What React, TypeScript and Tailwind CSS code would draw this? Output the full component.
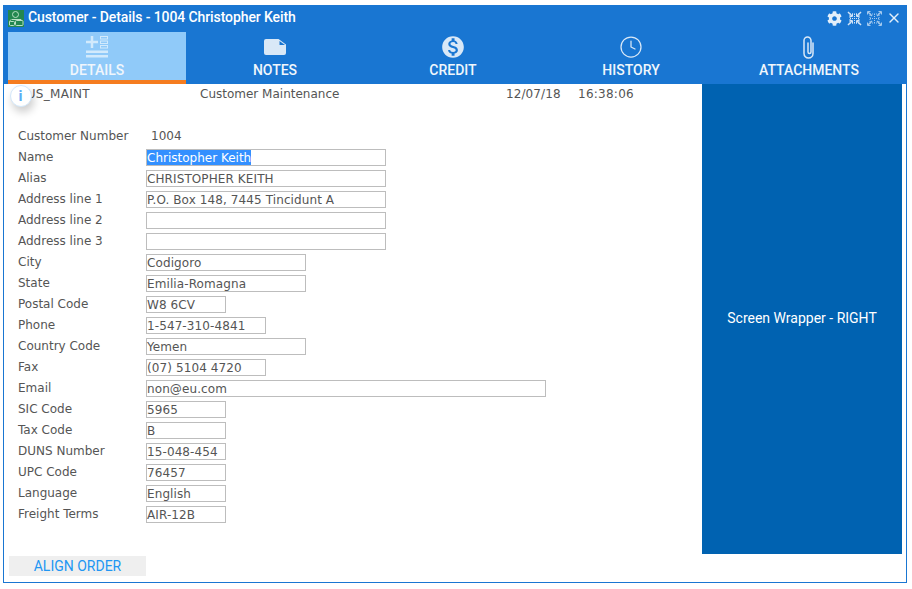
import React from "react";
import { Clock, X } from "lucide-react";
import { FaCog } from "react-icons/fa";
import { MdMonetizationOn } from "react-icons/md";

const fields = [
  { label: "Name", value: "Christopher Keith", width: "w-[240px]", selected: true },
  { label: "Alias", value: "CHRISTOPHER KEITH", width: "w-[240px]" },
  { label: "Address line 1", value: "P.O. Box 148, 7445 Tincidunt A", width: "w-[240px]" },
  { label: "Address line 2", value: "", width: "w-[240px]" },
  { label: "Address line 3", value: "", width: "w-[240px]" },
  { label: "City", value: "Codigoro", width: "w-[160px]" },
  { label: "State", value: "Emilia-Romagna", width: "w-[160px]" },
  { label: "Postal Code", value: "W8 6CV", width: "w-[80px]" },
  { label: "Phone", value: "1-547-310-4841", width: "w-[120px]" },
  { label: "Country Code", value: "Yemen", width: "w-[160px]" },
  { label: "Fax", value: "(07) 5104 4720", width: "w-[120px]" },
  { label: "Email", value: "non@eu.com", width: "w-[400px]" },
  { label: "SIC Code", value: "5965", width: "w-[80px]" },
  { label: "Tax Code", value: "B", width: "w-[80px]" },
  { label: "DUNS Number", value: "15-048-454", width: "w-[80px]" },
  { label: "UPC Code", value: "76457", width: "w-[80px]" },
  { label: "Language", value: "English", width: "w-[80px]" },
  { label: "Freight Terms", value: "AIR-12B", width: "w-[80px]" },
];

function CustomerIcon() {
  return (
    <svg width="16" height="17" viewBox="0 0 16 17" fill="none" stroke="#b9e0c4" strokeWidth="1">
      <rect width="16" height="17" fill="#23874f" stroke="none" />
      <circle cx="7.5" cy="4.5" r="3" />
      <path d="M4 9.5h7" />
      <path d="M1.5 15v-3c0-1.2 1-2 2-2.5" />
      <rect x="1.5" y="11.5" width="5" height="4" rx="1" />
      <rect x="7.5" y="10.5" width="7.5" height="5" rx="1" />
      <path d="M9.5 10.5v-1h3.5v1" />
    </svg>
  );
}

// the two window buttons only differ in which way the corner arrows point
function ResizeIcon({ inward }: { inward?: boolean }) {
  return (
    <svg
      width="15"
      height="15"
      viewBox="0 0 15 15"
      fill="none"
      stroke="white"
      strokeWidth="1.5"
      className={inward ? "opacity-80" : "opacity-60"}
    >
      <rect x="3" y="3" width="9" height="9" strokeWidth="1" strokeDasharray="1 1" />
      <path d="M7.5 3v9M3 7.5h9" strokeWidth="1" strokeDasharray="1 1" />
      <path d="M1 1l4 4M14 1l-4 4M1 14l4-4M14 14l-4-4" />
      {inward ? (
        <path d="M2.5 5.5h3v-3M9.5 2.5v3h3M2.5 9.5h3v3M9.5 12.5v-3h3" strokeWidth="1" />
      ) : (
        <path d="M0.5 3.5V0.5H3.5M11.5 0.5h3v3M0.5 11.5v3H3.5M11.5 14.5h3v-3" strokeWidth="1" />
      )}
    </svg>
  );
}

function DetailsIcon() {
  return (
    <svg width="22" height="22" viewBox="0 0 22 22" fill="#e3f2fd" className="opacity-80">
      <path d="M4.75 0h2.5v4.75H12v2.5H7.25V12h-2.5V7.25H0v-2.5h4.75z" />
      <rect x="14.5" y="0.5" width="7" height="2.5" fill="none" stroke="#e3f2fd" />
      <rect x="14.5" y="5" width="7" height="2.5" fill="none" stroke="#e3f2fd" />
      <rect x="14.5" y="9.5" width="7" height="2.5" fill="none" stroke="#e3f2fd" />
      <rect x="0" y="14.5" width="22" height="2.5" />
      <rect x="0" y="19" width="22" height="2.5" />
    </svg>
  );
}

function NoteIcon() {
  return (
    <svg width="22" height="16" viewBox="0 0 22 16" fill="#d9e8f7">
      <path d="M2 0h12.5l7.5 5.5V14a2 2 0 0 1-2 2H2a2 2 0 0 1-2-2V2a2 2 0 0 1 2-2z" />
      <path d="M15.5 2v4h5.5z" fill="#1976d2" />
    </svg>
  );
}

function ClipIcon() {
  return (
    <svg width="14" height="23" viewBox="0 0 14 23" fill="none" stroke="#d9e8f7" strokeWidth="1.5" strokeLinecap="round">
      <path d="M11 7v10.5a4.5 4.5 0 0 1-9 0V4.5a3.5 3.5 0 0 1 7 0V16a1.5 1.5 0 0 1-3 0V7" />
    </svg>
  );
}

const tabs = [
  { label: "DETAILS", icon: <DetailsIcon />, active: true },
  { label: "NOTES", icon: <NoteIcon /> },
  { label: "CREDIT", icon: <MdMonetizationOn size={26} color="#d9e8f7" /> },
  { label: "HISTORY", icon: <Clock size={24} color="#d9e8f7" strokeWidth={1.25} /> },
  { label: "ATTACHMENTS", icon: <ClipIcon /> },
];

export default function App() {
  return (
    <div className="w-[912px] h-[589px] bg-white pt-[5px] pl-[3px] font-['Liberation_Sans',sans-serif]">
      <div className="w-[904px] h-[578px] border border-[#1976d2] flex flex-col relative">
        {/* title bar */}
        <div className="h-[26px] bg-[#1976d2] flex items-center pl-[4px] pr-[4px] pb-[2px] text-white">
          <CustomerIcon />
          <span className="ml-[4px] -mt-[2px] text-[14px] font-medium tracking-[-0.1px] font-['Roboto',sans-serif]">
            Customer - Details - 1004 Christopher Keith
          </span>
          <div className="ml-auto flex items-center gap-[5px]">
            <FaCog size={15} className="text-[#e3effa]" />
            <ResizeIcon inward />
            <ResizeIcon />
            <X size={16} color="#e3effa" strokeWidth={2} className="-ml-[1px]" />
          </div>
        </div>

        {/* tabs */}
        <div className="h-[52px] bg-[#1976d2] flex pl-[4px]">
          {tabs.map((tab) => (
            <div
              key={tab.label}
              className={
                tab.active
                  ? "w-[178px] bg-[#90caf9] border-b-4 border-[#f57c1f] flex flex-col items-center"
                  : "w-[178px] flex flex-col items-center"
              }
            >
              <div className="h-[30px] flex items-center justify-center">{tab.icon}</div>
              <span className="text-[14px] font-medium leading-[16px] text-[#f0f6fc] font-['Roboto',sans-serif]">
                {tab.label}
              </span>
            </div>
          ))}
        </div>

        {/* body */}
        <div className="flex h-[470px] pr-[4px]">
          <div className="flex-1 text-[12px] text-[#555] font-['DejaVu_Sans',sans-serif]">
            <div className="flex h-[19px] items-center pl-[14px]">
              <span className="w-[182px] tracking-[0.3px]">CUS_MAINT</span>
              <span className="w-[306px]">Customer Maintenance</span>
              <span className="w-[72px] tracking-[0.1px]">12/07/18</span>
              <span className="tracking-[0.25px]">16:38:06</span>
            </div>
            <div className="flex h-[21px] items-center pl-[14px] mt-[22px]">
              <span className="w-[133px]">Customer Number</span>
              <span>1004</span>
            </div>
            {fields.map((f) => (
              <div key={f.label} className="flex h-[21px] items-center pl-[14px]">
                <span className="w-[128px] mt-[1px]">{f.label}</span>
                <div className={`${f.width} h-[17px] mt-[2px] border border-[#bdbdbd] flex items-stretch pt-[1px] tracking-[0.1px] leading-[15px]`}>
                  {f.selected ? (
                    <span className="bg-[#3390ff] text-white tracking-normal -mt-[1px] pt-[1px] h-[15px]">{f.value}</span>
                  ) : (
                    f.value
                  )}
                </div>
              </div>
            ))}
          </div>
          <div className="w-[200px] bg-[#0062b1] flex items-center justify-center pb-[2px] text-white text-[14px] font-['Roboto',sans-serif]">
            Screen Wrapper - RIGHT
          </div>
        </div>

        {/* footer */}
        <div className="pl-[5px] pt-[2px]">
          <div className="w-[137px] h-[20px] bg-[#efefef] text-[#2196f3] text-[14px] leading-[20px] text-center font-['Roboto',sans-serif]">
            ALIGN ORDER
          </div>
        </div>

        {/* info badge */}
        <div className="absolute left-[6px] top-[79px] w-[22px] h-[22px] pr-[1px] rounded-full bg-white border border-[#d3e7fa] shadow-[2px_5px_8px_rgba(0,0,0,0.2)] flex items-center justify-center text-[#5aaef5] text-[15px] font-bold font-['Roboto',sans-serif]">
          i
        </div>
      </div>
    </div>
  );
}
